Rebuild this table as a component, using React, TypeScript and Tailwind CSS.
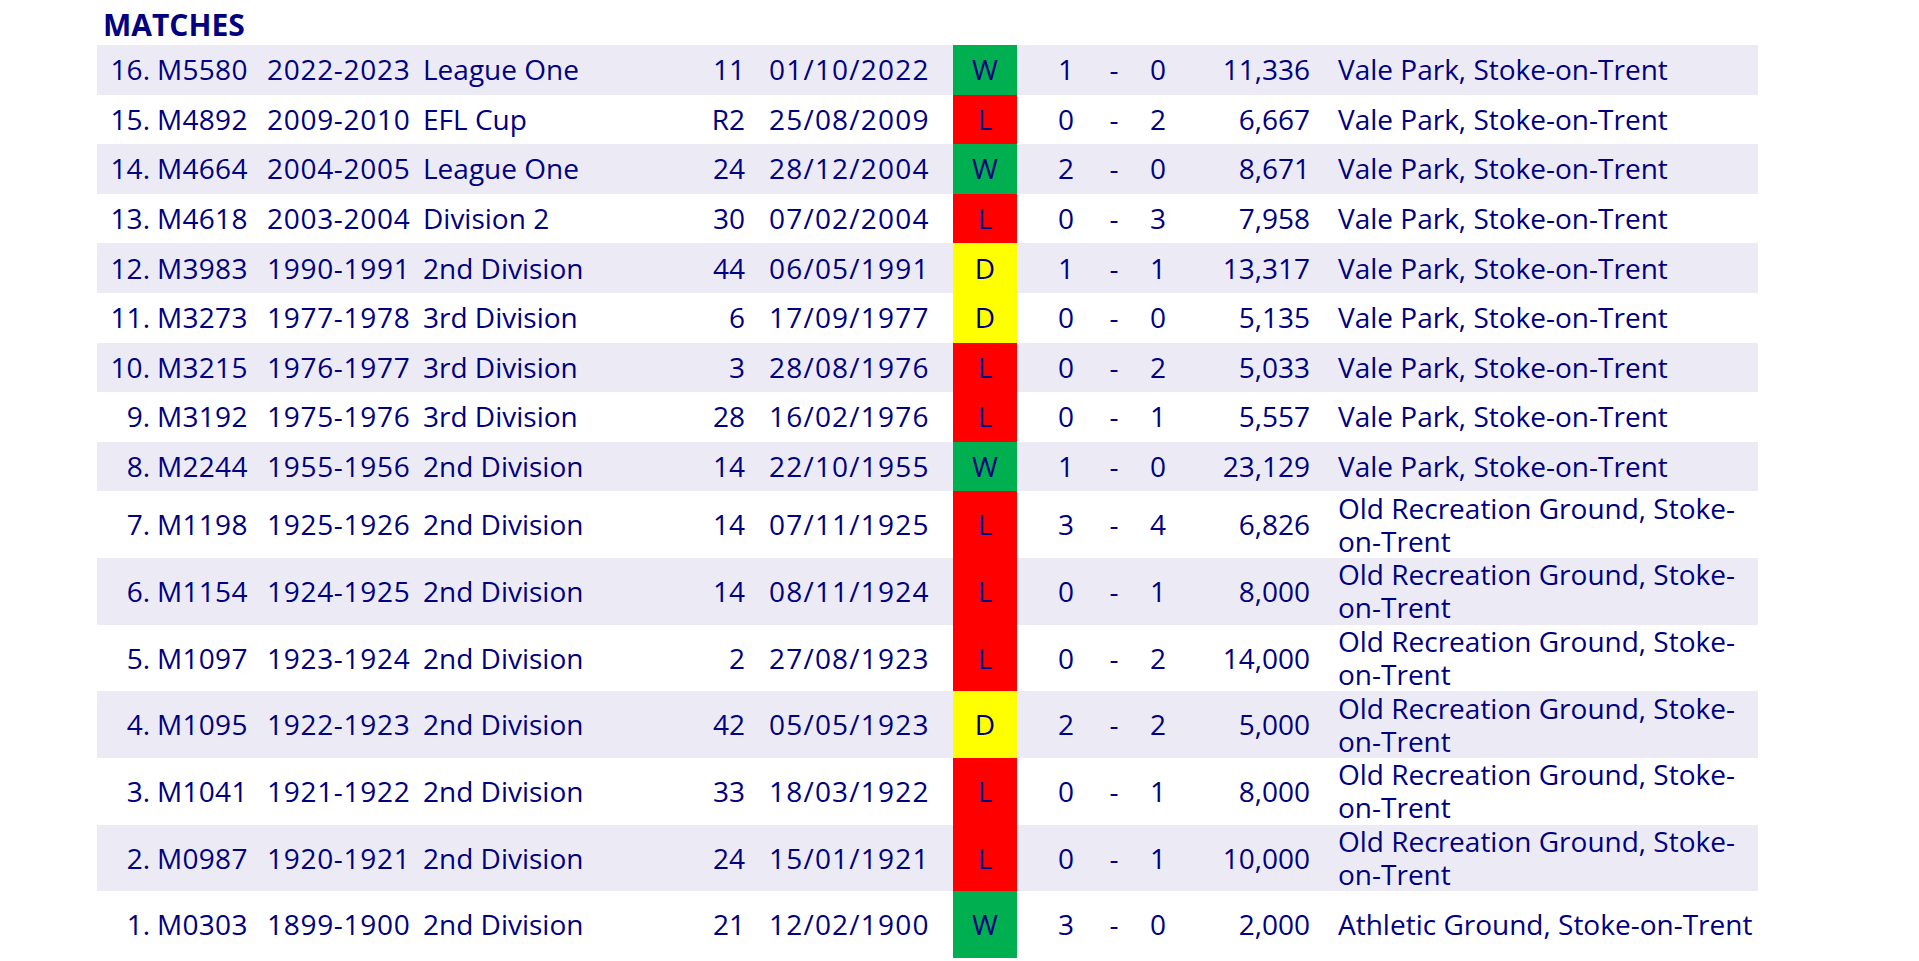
import React from "react";

type Match = {
  n: number;
  code: string;
  season: string;
  comp: string;
  round: string;
  date: string;
  res: "W" | "L" | "D";
  home: number;
  away: number;
  att: string;
  venue: string;
};

const matches: Match[] = [
  { n: 16, code: "M5580", season: "2022-2023", comp: "League One", round: "11", date: "01/10/2022", res: "W", home: 1, away: 0, att: "11,336", venue: "Vale Park, Stoke-on-Trent" },
  { n: 15, code: "M4892", season: "2009-2010", comp: "EFL Cup", round: "R2", date: "25/08/2009", res: "L", home: 0, away: 2, att: "6,667", venue: "Vale Park, Stoke-on-Trent" },
  { n: 14, code: "M4664", season: "2004-2005", comp: "League One", round: "24", date: "28/12/2004", res: "W", home: 2, away: 0, att: "8,671", venue: "Vale Park, Stoke-on-Trent" },
  { n: 13, code: "M4618", season: "2003-2004", comp: "Division 2", round: "30", date: "07/02/2004", res: "L", home: 0, away: 3, att: "7,958", venue: "Vale Park, Stoke-on-Trent" },
  { n: 12, code: "M3983", season: "1990-1991", comp: "2nd Division", round: "44", date: "06/05/1991", res: "D", home: 1, away: 1, att: "13,317", venue: "Vale Park, Stoke-on-Trent" },
  { n: 11, code: "M3273", season: "1977-1978", comp: "3rd Division", round: "6", date: "17/09/1977", res: "D", home: 0, away: 0, att: "5,135", venue: "Vale Park, Stoke-on-Trent" },
  { n: 10, code: "M3215", season: "1976-1977", comp: "3rd Division", round: "3", date: "28/08/1976", res: "L", home: 0, away: 2, att: "5,033", venue: "Vale Park, Stoke-on-Trent" },
  { n: 9, code: "M3192", season: "1975-1976", comp: "3rd Division", round: "28", date: "16/02/1976", res: "L", home: 0, away: 1, att: "5,557", venue: "Vale Park, Stoke-on-Trent" },
  { n: 8, code: "M2244", season: "1955-1956", comp: "2nd Division", round: "14", date: "22/10/1955", res: "W", home: 1, away: 0, att: "23,129", venue: "Vale Park, Stoke-on-Trent" },
  { n: 7, code: "M1198", season: "1925-1926", comp: "2nd Division", round: "14", date: "07/11/1925", res: "L", home: 3, away: 4, att: "6,826", venue: "Old Recreation Ground, Stoke-on-Trent" },
  { n: 6, code: "M1154", season: "1924-1925", comp: "2nd Division", round: "14", date: "08/11/1924", res: "L", home: 0, away: 1, att: "8,000", venue: "Old Recreation Ground, Stoke-on-Trent" },
  { n: 5, code: "M1097", season: "1923-1924", comp: "2nd Division", round: "2", date: "27/08/1923", res: "L", home: 0, away: 2, att: "14,000", venue: "Old Recreation Ground, Stoke-on-Trent" },
  { n: 4, code: "M1095", season: "1922-1923", comp: "2nd Division", round: "42", date: "05/05/1923", res: "D", home: 2, away: 2, att: "5,000", venue: "Old Recreation Ground, Stoke-on-Trent" },
  { n: 3, code: "M1041", season: "1921-1922", comp: "2nd Division", round: "33", date: "18/03/1922", res: "L", home: 0, away: 1, att: "8,000", venue: "Old Recreation Ground, Stoke-on-Trent" },
  { n: 2, code: "M0987", season: "1920-1921", comp: "2nd Division", round: "24", date: "15/01/1921", res: "L", home: 0, away: 1, att: "10,000", venue: "Old Recreation Ground, Stoke-on-Trent" },
  { n: 1, code: "M0303", season: "1899-1900", comp: "2nd Division", round: "21", date: "12/02/1900", res: "W", home: 3, away: 0, att: "2,000", venue: "Athletic Ground, Stoke-on-Trent" },
];

const resultBg = {
  W: "bg-[#00b050]",
  L: "bg-[#ff0000]",
  D: "bg-[#ffff00]",
};

function Row({ m, i }: { m: Match; i: number }) {
  const tall = m.n <= 7;
  const stripe = i % 2 === 0 ? "bg-[#ecebf5]" : "bg-white";
  return (
    <div
      className={`grid grid-cols-[53px_117px_156px_277px_45px_208px_64px_24px_50px_46px_42px_131px_448px] items-center ${stripe} ${
        tall ? "h-[66.7px]" : "h-[49.6px]"
      }`}
    >
      <div className="text-right">{m.n}.</div>
      <div className="pl-[7px] tracking-[0.3px]">{m.code}</div>
      <div className="tracking-[0.7px]">{m.season}</div>
      <div>{m.comp}</div>
      <div className="text-right">{m.round}</div>
      <div className="pl-[24px] tracking-[1.2px]">{m.date}</div>
      <div className={`h-full flex items-center justify-center ${resultBg[m.res]}`}>{m.res}</div>
      <div />
      <div className="text-center">{m.home}</div>
      <div className="text-center">-</div>
      <div className="text-center">{m.away}</div>
      <div className="text-right">{m.att}</div>
      <div className="pl-[28px] leading-[33px]">{m.venue}</div>
    </div>
  );
}

export default function App() {
  return (
    <div className="min-h-screen bg-white text-[#000080] font-['Open_Sans',sans-serif] text-[28px] leading-[33px]">
      <div className="h-[45px] pt-[10px] pl-[103px] text-[30px] leading-[30px] font-bold">MATCHES</div>
      <div className="pl-[97px]">
        <div className="w-[1661px]">
          {matches.map((m, i) => (
            <Row key={m.code} m={m} i={i} />
          ))}
        </div>
      </div>
    </div>
  );
}
